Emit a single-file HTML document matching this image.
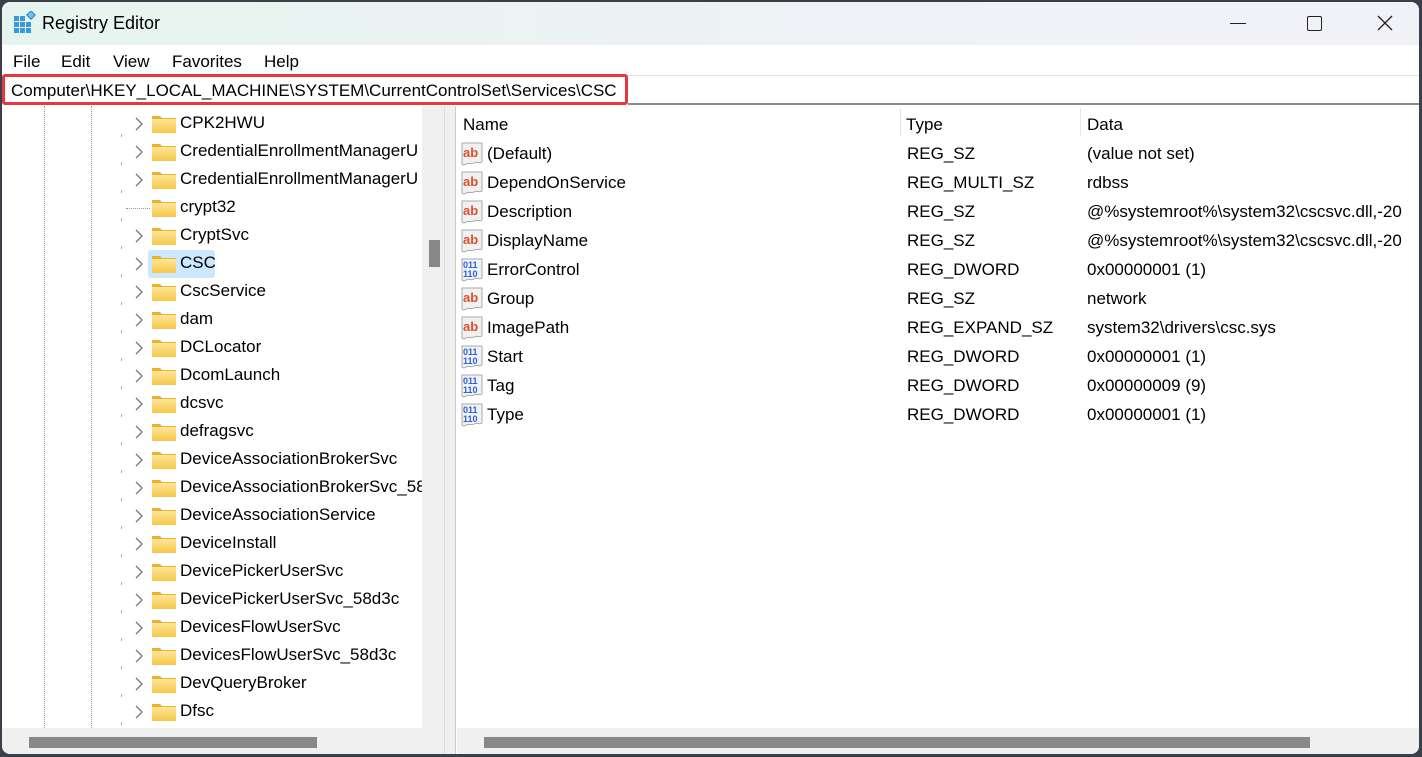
<!DOCTYPE html>
<html><head><meta charset="utf-8">
<style>
*{margin:0;padding:0;box-sizing:border-box}
body{width:1422px;height:757px;overflow:hidden;background:#3a3f4a;font-family:"Liberation Sans",sans-serif;font-size:17px;color:#000;position:relative}
.win{position:absolute;left:2px;top:2px;width:1417px;height:752px;background:#fff;border-radius:8px;overflow:hidden}
.title{position:absolute;left:0;top:0;width:100%;height:43px;background:linear-gradient(90deg,#e6f4ee,#eef2f6 60%,#f1f2f8)}
.title .t{position:absolute;left:40px;top:11px;font-size:18px}
.menu{position:absolute;top:50px;font-size:17px}
.addr{position:absolute;left:0;top:72px;width:626px;height:31px;border:3px solid #e8373e;border-radius:3px}
.addr span{position:absolute;left:6px;top:4px}
.addrline{position:absolute;left:626px;top:73px;right:0;height:30px;border-top:1px solid #e3e3e3;border-bottom:2px solid #8a8a8a}
.abs{position:absolute;white-space:nowrap}
.tree{position:absolute;left:0;top:104px;width:420px;height:622px;overflow:hidden}
.row{position:absolute;left:0;height:28px;width:420px}
.row .lbl{position:absolute;left:178px;top:3px}
.row .fold{position:absolute;left:150px;top:4px}
.row .chev{position:absolute;left:132px;top:7px}
.vl{position:absolute;top:0;height:622px;border-left:1px dotted #999}
.lrow{position:absolute;height:29px}
.lrow span{position:absolute;top:5px}
</style></head><body>
<div class="win">
 <div class="title">
  <svg class="abs" style="left:11px;top:9px" width="24" height="24" viewBox="0 0 24 24">
   <g fill="#3a9ad9"><rect x="1" y="5" width="5" height="5"/><rect x="7" y="5" width="5" height="5"/><rect x="1" y="11" width="5" height="5"/><rect x="7" y="11" width="5" height="5"/><rect x="13" y="11" width="5" height="5"/><rect x="1" y="17" width="5" height="5"/><rect x="7" y="17" width="5" height="5"/><rect x="13" y="17" width="5" height="5"/></g>
   <rect x="15" y="1" width="6" height="6" fill="#6ec2f0" stroke="#2a7fc0" transform="rotate(45 18 4)"/>
  </svg>
  <div class="t">Registry Editor</div>
  <div class="abs" style="left:1228px;top:21px;width:16px;height:1px;background:#222"></div>
  <div class="abs" style="left:1305px;top:14px;width:15px;height:15px;border:1.5px solid #222;border-radius:2px"></div>
  <svg class="abs" style="left:1375px;top:13px" width="16" height="16"><path d="M1 1L15 15M15 1L1 15" stroke="#222" stroke-width="1.3"/></svg>
 </div>
 <div class="menu" style="left:11px">File</div>
 <div class="menu" style="left:59px">Edit</div>
 <div class="menu" style="left:111px">View</div>
 <div class="menu" style="left:170px">Favorites</div>
 <div class="menu" style="left:262px">Help</div>
 <div class="addrline"></div>
 <div class="addr"><span>Computer\HKEY_LOCAL_MACHINE\SYSTEM\CurrentControlSet\Services\CSC</span></div>

 <div class="tree" id="tree">
  <div class="vl" style="left:42px"></div>
  <div class="vl" style="left:89px"></div>
 </div>
 <div class="abs" style="left:420px;top:104px;width:22px;height:622px;background:#f0f0f0"></div>
 <div class="abs" style="left:427px;top:238px;width:11px;height:27px;background:#888"></div>
 <div class="abs" style="left:442px;top:104px;width:12px;height:648px;background:#f0f0f0;border-left:1px solid #ddd;border-right:1px solid #ccc"></div>
 <div class="abs" style="left:0;top:726px;width:442px;height:26px;background:#f0f0f0"></div>
 <div class="abs" style="left:27px;top:735px;width:288px;height:11px;background:#888"></div>
 <div class="abs" style="left:455px;top:726px;width:962px;height:26px;background:#f0f0f0"></div>
 <div class="abs" style="left:482px;top:735px;width:826px;height:11px;background:#888"></div>

 <div class="abs" style="left:898px;top:106px;height:28px;border-left:1px solid #e5e5e5"></div>
 <div class="abs" style="left:1078px;top:106px;height:28px;border-left:1px solid #e5e5e5"></div>
 <div class="abs" style="left:461px;top:113px">Name</div>
 <div class="abs" style="left:904px;top:113px">Type</div>
 <div class="abs" style="left:1085px;top:113px">Data</div>
 <div id="list"></div>
</div>
<script>
var tree=document.getElementById('tree');
var items=[["CPK2HWU",1],["CredentialEnrollmentManagerU",1],["CredentialEnrollmentManagerU",1],["crypt32",0],["CryptSvc",1],["CSC",1,1],["CscService",1],["dam",1],["DCLocator",1],["DcomLaunch",1],["dcsvc",1],["defragsvc",1],["DeviceAssociationBrokerSvc",1],["DeviceAssociationBrokerSvc_58",1],["DeviceAssociationService",1],["DeviceInstall",1],["DevicePickerUserSvc",1],["DevicePickerUserSvc_58d3c",1],["DevicesFlowUserSvc",1],["DevicesFlowUserSvc_58d3c",1],["DevQueryBroker",1],["Dfsc",1]];
var fold='<svg class="fold" width="24" height="20" viewBox="0 0 24 20"><defs><linearGradient id="fg" x1="0" y1="0" x2="0" y2="1"><stop offset="0" stop-color="#fde59a"/><stop offset="1" stop-color="#f6c847"/></linearGradient></defs><path d="M0 2h8l2 2h14v15h-24z" fill="#e8b32e"/><rect x="0" y="5" width="24" height="14" fill="url(#fg)"/></svg>';
var chev='<svg class="chev" width="10" height="14"><path d="M2 1l6 6-6 6" fill="none" stroke="#777" stroke-width="1.3"/></svg>';
var h='';
items.forEach(function(it,i){
 var top=4+i*28;
 h+='<div class="row" style="top:'+top+'px">';
 if(it[2]) h+='<div class="abs" style="left:146px;top:0;width:67px;height:28px;background:#cce8ff;border-radius:3px"></div>';
 h+=(it[1]?chev:'<div class="abs" style="left:124px;top:14px;width:24px;border-top:1px dotted #999"></div>')+fold+'<span class="lbl">'+it[0]+'</span></div>';
 h+='<div class="abs" style="left:119px;top:'+(top+24)+'px;width:1px;height:3px;background:#aaa"></div>';
});
tree.insertAdjacentHTML('beforeend',h);
var ab='<svg class="abs" style="left:458px;top:3px" width="24" height="24" viewBox="0 0 24 24"><path d="M2 1h20v19c-3 2-5-1-8 1s-6-1-8 1-4 0-4 0z" fill="#f1f1f1" stroke="#aaa"/><text x="3" y="15" font-family="Liberation Sans" font-weight="bold" font-size="13" fill="#d9502c">ab</text></svg>';
var bin='<svg class="abs" style="left:458px;top:3px" width="24" height="24" viewBox="0 0 24 24"><path d="M2 1h20v19c-3 2-5-1-8 1s-6-1-8 1-4 0-4 0z" fill="#eef2fa" stroke="#aaa"/><text x="3" y="10" font-family="Liberation Sans" font-weight="bold" font-size="9" fill="#2f5fd0">011</text><text x="3" y="19" font-family="Liberation Sans" font-weight="bold" font-size="9" fill="#2f5fd0">110</text></svg>';
var vals=[["(Default)","REG_SZ","(value not set)",0],["DependOnService","REG_MULTI_SZ","rdbss",0],["Description","REG_SZ","@%systemroot%\\system32\\cscsvc.dll,-20",0],["DisplayName","REG_SZ","@%systemroot%\\system32\\cscsvc.dll,-20",0],["ErrorControl","REG_DWORD","0x00000001 (1)",1],["Group","REG_SZ","network",0],["ImagePath","REG_EXPAND_SZ","system32\\drivers\\csc.sys",0],["Start","REG_DWORD","0x00000001 (1)",1],["Tag","REG_DWORD","0x00000009 (9)",1],["Type","REG_DWORD","0x00000001 (1)",1]];
var l='';
vals.forEach(function(v,i){
 var top=137+i*29;
 l+='<div class="lrow" style="left:0;top:'+top+'px;width:1417px">'+(v[3]?bin:ab)+'<span style="left:485px">'+v[0]+'</span><span style="left:905px">'+v[1]+'</span><span style="left:1085px">'+v[2]+'</span></div>';
});
document.getElementById('list').outerHTML='<div class="abs" style="left:0;top:0;width:1417px;height:726px;overflow:hidden">'+l+'</div>';
</script>
</body></html>
